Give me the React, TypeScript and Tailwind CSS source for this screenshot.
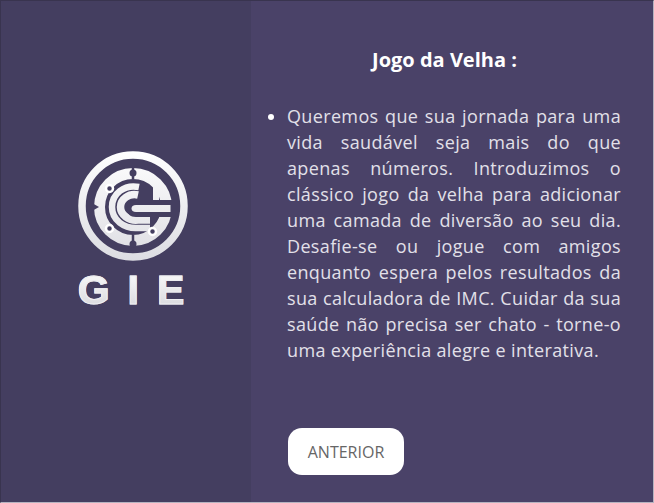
import { useId } from "react"

function Logo() {
  const id = useId()
  const paint = `url(#${id})`
  return (
    <svg width="110" height="110" viewBox="0 0 110 110" fill="none">
      <defs>
        <linearGradient id={id} gradientUnits="userSpaceOnUse" x1="0" y1="0" x2="0" y2="110">
          <stop offset="0" stopColor="#ffffff" />
          <stop offset="1" stopColor="#dcdce2" />
        </linearGradient>
      </defs>
      <circle cx="55" cy="55" r="51" stroke={paint} strokeWidth="7.500" />
      {/* outer band */}
      <circle cx="55" cy="56" r="33.500" stroke={paint} strokeWidth="11" />
      <path d="M55 16V28M55 84V96" stroke="#443e60" strokeWidth="2.500" />
      <path d="M14 52L21 56L14 60Z" fill="#443e60" />
      {/* dark middle */}
      <circle cx="55" cy="56" r="27" fill="#443e60" />
      {/* right strip above the bar */}
      <path d="M75 33H81V49H75Z" fill={paint} />
      {/* the two C arcs */}
      <path d="M61 36C46 33 34 43 34 56C34 69 46 78 60 77H72" stroke={paint} strokeWidth="6.500" />
      <path d="M60 44C51 42 42.500 48 42.500 56C42.500 64 51 70 60 69H72" stroke={paint} strokeWidth="7.500" />
      {/* bar */}
      <path d="M94 49H58C52 49 49 52 49 57.500C49 63 52 66 58 66H94Z" fill="#443e60" />
      <path d="M92.500 54H58C55 54 53.500 55.500 53.500 57.500C53.500 59.500 55 61 58 61H92.500Z" fill={paint} />
      {/* nodes */}
      <g fill="#443e60" stroke="#ffffff" strokeWidth="2.500">
        <circle cx="31.500" cy="37.500" r="3.500" />
        <circle cx="31.500" cy="77.500" r="3.500" />
        <circle cx="74.500" cy="80.500" r="3.500" />
      </g>
      <g fill="#443e60">
        <circle cx="55" cy="22" r="3.500" />
        <circle cx="55" cy="93" r="3.500" />
      </g>
    </svg>
  )
}

export default function App() {
  return (
    <div className="flex h-[503px] w-[654px] overflow-hidden border border-[#39344f] border-r-[#b5b3c0] border-b-[#b5b3c0] font-['Open_Sans',sans-serif]">
      <aside className="flex w-[250px] shrink-0 flex-col items-center bg-[#443e60] pt-[150px] pl-[13px]">
        <Logo />
        <p className="mt-[6px] bg-gradient-to-b from-white to-[#d4d4d8] bg-clip-text pl-[15px] font-['Liberation_Sans',sans-serif] text-[41px] leading-[46px] font-bold tracking-[18px] text-transparent [-webkit-text-stroke:1px_#eeeef1]">
          GIE
        </p>
      </aside>

      <main className="flex flex-1 flex-col bg-[#4a4268] pt-[44px] pr-[32px] pl-[36px]">
        <h1 className="pr-[19px] text-center text-[20px] leading-[30px] font-bold text-white">
          Jogo da Velha :
        </h1>
        <ul className="mt-[28px] list-disc text-[18px] leading-[26px] tracking-[0.35px] text-[#e2e0e9]">
          <li className="text-justify marker:text-white">
            Queremos que sua jornada para uma vida saudável seja mais do que apenas números.
            Introduzimos o clássico jogo da velha para adicionar uma camada de diversão ao seu dia.
            Desafie-se ou jogue com amigos enquanto espera pelos resultados da sua calculadora de
            IMC. Cuidar da sua saúde não precisa ser chato - torne-o uma experiência alegre e
            interativa.
          </li>
        </ul>
        <button className="mt-[65px] ml-[1px] flex h-[47px] w-[116px] items-center justify-center self-start rounded-[14px] bg-white text-[16px] text-[#666666]">
          ANTERIOR
        </button>
      </main>
    </div>
  )
}
